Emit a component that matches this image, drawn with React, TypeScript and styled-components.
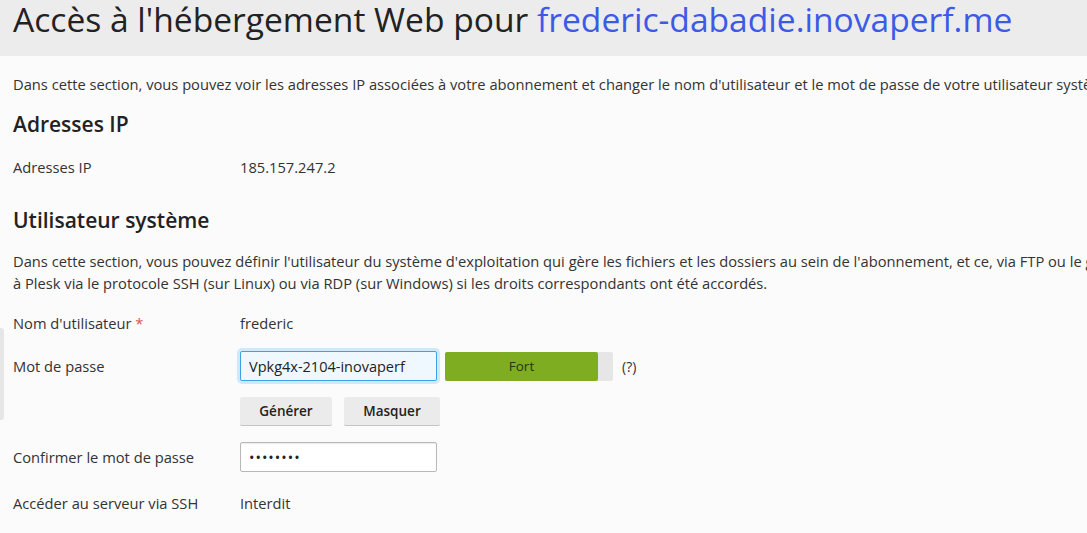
import React from "react";
import styled, { createGlobalStyle } from "styled-components";

const Global = createGlobalStyle`
  html, body { margin: 0; padding: 0; }
  body {
    background: #fbfbfb;
    font-family: "Open Sans", "Noto Sans", sans-serif;
    color: #333;
    overflow: hidden;
  }
`;

const Page = styled.div`
  position: relative;
  width: 1087px;
  min-height: 533px;
  overflow: hidden;
`;

const Header = styled.header`
  background: #ececec;
  height: 56px;
  padding: 0 13px;
  display: flex;
  align-items: flex-start;
`;

const Title = styled.h1`
  margin: 0;
  font-size: 33.6px;
  font-weight: 400;
  color: #222;
  white-space: nowrap;
  line-height: 38px;
  span { color: #3c5ae6; }
`;

const Content = styled.main`
  padding: 0 13px;
`;

const Para = styled.p<{ $top: number }>`
  margin: ${(p) => p.$top}px 0 0;
  font-size: 14.7px;
  line-height: 22px;
  white-space: nowrap;
  color: #333;
`;

const H2 = styled.h2<{ $top: number }>`
  margin: ${(p) => p.$top}px 0 0;
  font-size: 21px;
  font-weight: 600;
  color: #222;
  line-height: 28px;
`;

const Form = styled.div<{ $top: number }>`
  margin-top: ${(p) => p.$top}px;
  display: grid;
  grid-template-columns: 227px 1fr;
  align-items: center;
`;

const Label = styled.div<{ $h: number }>`
  font-size: 14.7px;
  color: #333;
  height: ${(p) => p.$h}px;
  display: flex;
  align-items: center;
  span { color: #d9534f; }
`;

const Value = styled.div<{ $h: number }>`
  font-size: 14.7px;
  color: #333;
  height: ${(p) => p.$h}px;
  display: flex;
  align-items: center;
  gap: 8px;
`;

const Input = styled.input<{ $focus?: boolean }>`
  box-sizing: border-box;
  width: 197px;
  height: 30px;
  padding: 0 8px;
  font-family: "Open Sans", sans-serif;
  font-size: 14.5px;
  color: #222;
  border: 1px solid ${(p) => (p.$focus ? "#3aa3e3" : "#b8b8b8")};
  background: ${(p) => (p.$focus ? "#f0f8ff" : "#fff")};
  box-shadow: ${(p) =>
    p.$focus ? "0 0 0 3px #cfe9fb" : "inset 0 1px 1px rgba(0,0,0,0.08)"};
  border-radius: 2px;
  outline: none;
  letter-spacing: ${(p) => (p.$focus ? "0" : "1px")};
`;

const Strength = styled.div`
  width: 168px;
  height: 29px;
  background: #e6e6e6;
  border-radius: 2px;
  display: flex;
`;

const StrengthFill = styled.div`
  background: #7fad22;
  border-radius: 2px;
  display: flex;
  align-items: center;
  justify-content: center;
  font-size: 13.5px;
  color: #2a3312;
`;

const Help = styled.span`
  font-size: 14px;
  color: #333;
  margin-left: 1px;
`;

const Buttons = styled.div`
  display: flex;
  gap: 12px;
  align-items: center;
  height: 34px;
`;

const Button = styled.button<{ $w: number }>`
  box-sizing: border-box;
  width: ${(p) => p.$w}px;
  height: 29px;
  background: #ebebeb;
  border: none;
  border-bottom: 1px solid #c4c4c4;
  border-radius: 2px;
  font-family: "Open Sans", sans-serif;
  font-weight: 600;
  font-size: 13.5px;
  color: #222;
  padding: 0;
`;

const SideTab = styled.div`
  position: absolute;
  left: 0;
  top: 328px;
  width: 4px;
  height: 92px;
  background: #e6e6e6;
  border-radius: 0 3px 3px 0;
`;

export default function App() {
  const strength = 153;
  return (
    <Page>
      <Global />
      <Header>
        <Title>
          Accès à l'hébergement Web pour <span>frederic-dabadie.inovaperf.me</span>
        </Title>
      </Header>
      <Content>
        <Para $top={17}>
          Dans cette section, vous pouvez voir les adresses IP associées à votre abonnement et changer le nom d'utilisateur et le mot de passe de votre utilisateur système.
        </Para>
        <H2 $top={15}>Adresses IP</H2>
        <Form $top={14}>
          <Label $h={30}>Adresses IP</Label>
          <Value $h={30}>185.157.247.2</Value>
        </Form>
        <H2 $top={24}>Utilisateur système</H2>
        <Para $top={16}>
          Dans cette section, vous pouvez définir l'utilisateur du système d'exploitation qui gère les fichiers et les dossiers au sein de l'abonnement, et ce, via FTP ou le gestionnaire de fichiers.
          <br />
          à Plesk via le protocole SSH (sur Linux) ou via RDP (sur Windows) si les droits correspondants ont été accordés.
        </Para>
        <Form $top={14}>
          <Label $h={30}>
            Nom d'utilisateur&nbsp;<span>*</span>
          </Label>
          <Value $h={30}>frederic</Value>
          <Label $h={56}>Mot de passe</Label>
          <Value $h={56}>
            <Input $focus defaultValue="Vpkg4x-2104-inovaperf" />
            <Strength>
              <StrengthFill style={{ width: strength }}>Fort</StrengthFill>
            </Strength>
            <Help>(?)</Help>
          </Value>
          <Label $h={34} />
          <Buttons>
            <Button $w={92}>Générer</Button>
            <Button $w={96}>Masquer</Button>
          </Buttons>
          <Label $h={58}>Confirmer le mot de passe</Label>
          <Value $h={58}>
            <Input type="password" defaultValue="frederic" />
          </Value>
          <Label $h={34}>Accéder au serveur via SSH</Label>
          <Value $h={34}>Interdit</Value>
        </Form>
      </Content>
      <SideTab />
    </Page>
  );
}
